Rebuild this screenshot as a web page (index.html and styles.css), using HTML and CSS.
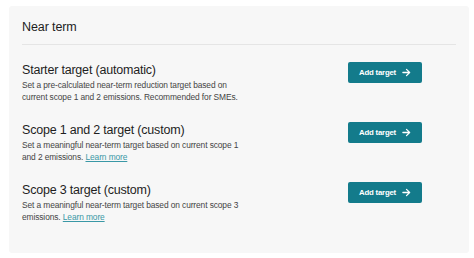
FILE: index.html
```html
<!DOCTYPE html>
<html>
<head>
<meta charset="utf-8">
<link rel="stylesheet" href="styles.css">
</head>
<body>
<section class="card">
  <header class="card-head">Near term</header>
  <div class="rows">
    <div class="row">
      <div class="info">
        <h3 class="title">Starter target (automatic)</h3>
        <p class="desc">Set a pre-calculated near-term reduction target based on current scope 1 and 2 emissions. Recommended for SMEs.</p>
      </div>
      <button class="btn">Add target <svg width="9" height="9" viewBox="0 0 10 10"><path d="M1 5h7.5M5 1.5L8.5 5 5 8.5" fill="none" stroke="#fff" stroke-width="1.4" stroke-linecap="round" stroke-linejoin="round"/></svg></button>
    </div>
    <div class="row">
      <div class="info">
        <h3 class="title">Scope 1 and 2 target (custom)</h3>
        <p class="desc">Set a meaningful near-term target based on current scope 1 and 2 emissions. <a href="#" class="link">Learn more</a></p>
      </div>
      <button class="btn">Add target <svg width="9" height="9" viewBox="0 0 10 10"><path d="M1 5h7.5M5 1.5L8.5 5 5 8.5" fill="none" stroke="#fff" stroke-width="1.4" stroke-linecap="round" stroke-linejoin="round"/></svg></button>
    </div>
    <div class="row">
      <div class="info">
        <h3 class="title">Scope 3 target (custom)</h3>
        <p class="desc">Set a meaningful near-term target based on current scope 3 emissions. <a href="#" class="link">Learn more</a></p>
      </div>
      <button class="btn">Add target <svg width="9" height="9" viewBox="0 0 10 10"><path d="M1 5h7.5M5 1.5L8.5 5 5 8.5" fill="none" stroke="#fff" stroke-width="1.4" stroke-linecap="round" stroke-linejoin="round"/></svg></button>
    </div>
  </div>
</section>
</body>
</html>
```
FILE: styles.css
```css
* { box-sizing: border-box; }
html, body { margin: 0; padding: 0; background: #fff; }
body {
  font-family: "Liberation Sans", Arial, sans-serif;
  color: #1e1e1e;
  padding: 6px 5px 5px 9px;
}
.card {
  background: #f7f7f7;
  border-radius: 3px;
  width: 460px;
  height: 247px;
  padding: 0 13px;
}
.card-head {
  font-size: 12.5px;
  line-height: 17px;
  padding: 13px 0 8px;
  border-bottom: 1px solid #e5e5e5;
  letter-spacing: -0.1px;
}
.rows {
  display: flex;
  flex-direction: column;
  gap: 19px;
  padding: 17px 34px 0 0;
}
.row {
  display: flex;
  justify-content: space-between;
  align-items: flex-start;
}
.info { width: 222px; }
.title {
  margin: 0;
  font-size: 12.5px;
  line-height: 17px;
  font-weight: 400;
  letter-spacing: -0.2px;
}
.desc {
  margin: 0;
  font-size: 8.4px;
  line-height: 12px;
  color: #444;
  letter-spacing: -0.1px;
}
.link { color: #3a98a6; text-decoration: underline; }
.btn {
  width: 74px;
  height: 21px;
  border: 0;
  border-radius: 2px;
  background: #137b8b;
  color: #fff;
  font-family: inherit;
  font-size: 7.8px;
  font-weight: 700;
  letter-spacing: -0.2px;
  display: flex;
  align-items: center;
  justify-content: center;
  gap: 6px;
  padding: 0;
}
```
